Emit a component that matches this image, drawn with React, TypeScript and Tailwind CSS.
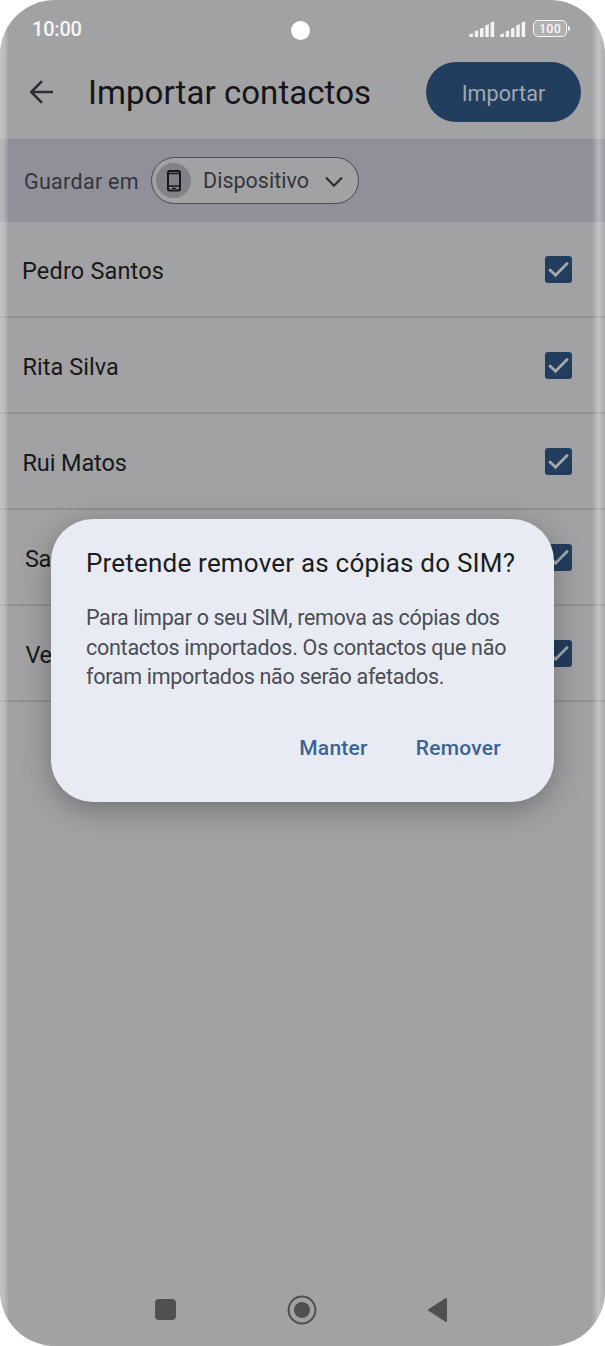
const contacts = [
    { name: 'Pedro Santos', className: 'pl-[22px] tracking-[0.17px]' },
    { name: 'Rita Silva', className: 'pl-[22.5px] tracking-[0.05px]' },
    { name: 'Rui Matos', className: 'pl-[22.5px] tracking-[-0.12px]' },
    { name: 'Sa', className: 'pl-[25px] tracking-[-0.5px]' },
    { name: 'Ve', className: 'pl-[25.5px] tracking-[-0.5px]' },
]

function Signal() {
    return (
        <svg width="26" height="17" viewBox="0 0 26 17" fill="#f4f4f4">
            <path d="M0.3 16V13.6L3.8 12.2V16ZM5.7 16V10.6L9.2 9.2V16ZM11 16V7.8L14.5 6.4V16ZM16.3 16V4.4L19.8 3V16ZM21.6 16V1.6L25.2 0.2V16Z" />
        </svg>
    )
}

function StatusBar() {
    return (
        <div className="relative flex h-[58px] items-start justify-between pl-8 pr-[35px] text-[#f6f6f6]">
            <span className="pt-[17px] text-[20px] font-medium leading-6 tracking-[-0.2px]">10:00</span>
            <div className="absolute left-[291px] top-[21px] size-[19px] rounded-full bg-white" />
            <div className="flex items-start gap-[5px] pt-[21px]">
                <Signal />
                <Signal />
                <div className="-mt-px ml-[2px] flex items-center gap-px">
                    <div className="flex h-[17px] w-[34px] items-center justify-center rounded-[5px] border-[1.5px] border-[#f4f4f4] bg-[#b0b0b1] pt-px text-[12.5px] font-medium leading-none tracking-[0.2px]">
                        100
                    </div>
                    <div className="h-[5px] w-[2px] rounded-r bg-[#f4f4f4]" />
                </div>
            </div>
        </div>
    )
}

function Header() {
    return (
        <header className="flex h-[81px] items-start pl-7 pr-6">
            <svg className="mt-[21px]" width="26" height="26" viewBox="0 0 26 26" fill="none" stroke="#2b2d30" strokeWidth="2.5">
                <path d="M25 13H3M14 2.2L3.2 13L14 23.8" />
            </svg>
            <h1 className="ml-[34px] mt-[15px] flex-1 whitespace-nowrap text-[33px] leading-10 tracking-[0.06px] text-[#151517]">
                Importar contactos
            </h1>
            <button className="mt-1 h-[60px] w-[155px] rounded-full bg-[#223e5e] pt-1 text-[21.5px] font-[450] tracking-[0.1px] text-[#a3a8b1]">
                Importar
            </button>
        </header>
    )
}

function SaveBar() {
    return (
        <div className="flex h-[83px] items-center bg-[#8f9099] pl-6 text-[#343539]">
            <span className="w-[127px] whitespace-nowrap pt-1 text-[21.5px] font-[450] tracking-[0.3px]">Guardar em</span>
            <button className="flex h-[47px] w-[208px] items-center rounded-full border-[1.5px] border-[#4a4b50] bg-[#a2a2a4] pl-1">
                <span className="flex size-[35px] items-center justify-center rounded-full bg-[#818288]">
                    <svg width="14" height="22" viewBox="0 0 14 22" fill="none">
                        <rect x="1" y="1" width="12" height="19.5" rx="1.5" stroke="#17181a" strokeWidth="2" />
                        <path d="M1 3.5H13M1 16H13" stroke="#17181a" strokeWidth="1.6" />
                        <path d="M5 18.3H9" stroke="#17181a" strokeWidth="1.2" />
                    </svg>
                </span>
                <span className="ml-3 w-[105px] whitespace-nowrap pt-0.5 text-left text-[21.5px] font-[450] tracking-[0.02px]">
                    Dispositivo
                </span>
                <svg className="ml-[17px] mt-0.5" width="18" height="12" viewBox="0 0 18 12" fill="none" stroke="#2e2f33" strokeWidth="2.2">
                    <path d="M1 1.5L9 9.7L17 1.5" />
                </svg>
            </button>
        </div>
    )
}

function Checkbox() {
    return (
        <svg width="27" height="27" viewBox="0 0 27 27" fill="none">
            <rect width="27" height="27" rx="3" fill="#223e5e" />
            <path d="M4.2 13.2L10.6 19.2L22.8 6.8" stroke="#a6a8ac" strokeWidth="2.8" />
        </svg>
    )
}

function RemoveDialog() {
    return (
        <div
            role="dialog"
            className="absolute left-[51px] top-[519px] h-[283px] w-[503px] rounded-[42px] bg-[#e8ebf4] pl-[35px] pt-[28px] shadow-[0_7px_30px_rgba(0,0,0,0.3)]"
        >
            <h2 className="whitespace-nowrap text-[26px] leading-8 tracking-[0.2px] text-[#1c1d20]">
                Pretende remover as cópias do SIM?
            </h2>
            <p className="mt-6 whitespace-nowrap text-[21.5px] leading-[29.5px] text-[#4a4d54]">
                <span className="block tracking-[-0.34px]">Para limpar o seu SIM, remova as cópias dos</span>
                <span className="block tracking-[-0.26px]">contactos importados. Os contactos que não</span>
                <span className="block tracking-[-0.28px]">foram importados não serão afetados.</span>
            </p>
            <div className="mt-10 flex justify-end gap-12 pr-[53px] text-[21px] font-medium leading-8 tracking-[0.25px] text-[#3a639a]">
                <button>Manter</button>
                <button>Remover</button>
            </div>
        </div>
    )
}

export default function App() {
    return (
        <div className="h-[1346px] w-[605px] bg-white font-['Roboto',sans-serif]">
            <main className="relative flex h-full flex-col overflow-hidden rounded-[55px] bg-[#a2a2a4]">
                <StatusBar />
                <Header />
                <SaveBar />
                <ul>
                    {contacts.map(({ name, className }) => (
                        <li
                            key={name}
                            className={`flex h-24 items-center justify-between border-b-2 border-[#919193] pr-[33px] text-[23.5px] text-[#17181a] ${className}`}
                        >
                            <span className="pt-[5px]">{name}</span>
                            <Checkbox />
                        </li>
                    ))}
                </ul>
                <nav className="mt-auto flex h-[73px] items-center pl-[155px]">
                    <div className="size-[21px] rounded-[4px] bg-[#505050]" />
                    <svg className="ml-[111px]" width="30" height="30" viewBox="0 0 30 30" fill="none">
                        <circle cx="15" cy="15" r="13.4" stroke="#505050" strokeWidth="2" />
                        <circle cx="15" cy="15" r="8" fill="#505050" />
                    </svg>
                    <svg className="ml-[110px]" width="21" height="26" viewBox="0 0 21 26" fill="#505050" stroke="#505050" strokeWidth="2" strokeLinejoin="round">
                        <path d="M2 13L19 2V24Z" />
                    </svg>
                </nav>
                <div className="pointer-events-none absolute inset-y-0 left-0 w-2 bg-linear-to-r from-white/35 via-white/30 to-white/5" />
                <div className="pointer-events-none absolute inset-y-0 right-0 w-[13px] bg-linear-to-r from-white/0 via-white/35 to-white/10" />
                <RemoveDialog />
            </main>
        </div>
    )
}
